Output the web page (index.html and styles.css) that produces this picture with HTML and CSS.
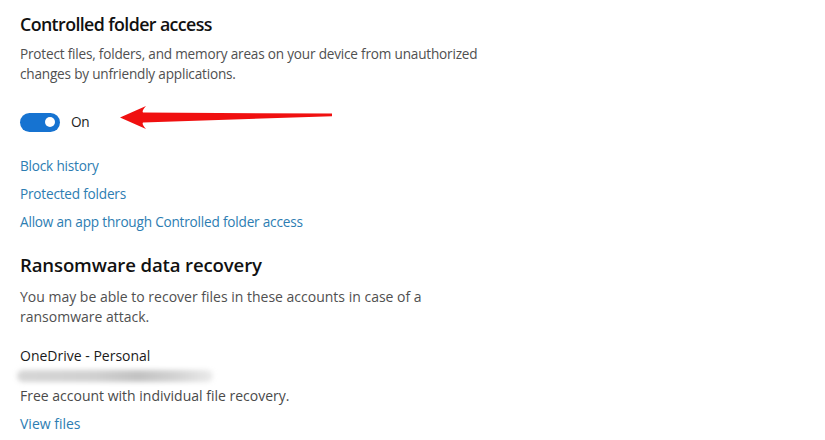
FILE: index.html
```html
<!DOCTYPE html>
<html lang="en">
<head>
<meta charset="utf-8">
<title>Controlled folder access</title>
<link rel="stylesheet" href="styles.css">
</head>
<body>
<main class="page">
  <section class="section section-top">
    <h2 class="title title-1">Controlled folder access</h2>
    <p class="desc">Protect files, folders, and memory areas on your device from unauthorized<br>changes by unfriendly applications.</p>
    <div class="toggle-row">
      <span class="toggle"><span class="knob"></span></span>
      <span class="toggle-label">On</span>
    </div>
    <nav class="links">
      <a class="link" href="#">Block history</a>
      <a class="link" href="#">Protected folders</a>
      <a class="link" href="#">Allow an app through Controlled folder access</a>
    </nav>
  </section>
  <section class="section">
    <h2 class="title title-2">Ransomware data recovery</h2>
    <p class="desc desc-2">You may be able to recover files in these accounts in case of a<br>ransomware attack.</p>
    <div class="account">
      <div class="account-name">OneDrive - Personal</div>
      <div class="account-email"><span class="blur-bar"></span></div>
      <div class="account-info">Free account with individual file recovery.</div>
      <a class="link link-view" href="#">View files</a>
    </div>
  </section>
  <svg class="arrow" width="230" height="40" viewBox="110 98 230 40" aria-hidden="true">
    <path d="M120 117.5 L146 106 Q141.5 111 143 112.5 L332 113.6 L332 116.2 L143 122.5 Q141.5 124 146 129 Z" fill="#f01010"/>
  </svg>
</main>
</body>
</html>
```
FILE: styles.css
```css
html, body {
  margin: 0;
  padding: 0;
  background: #ffffff;
}

body {
  font-family: "Open Sans", "Noto Sans", sans-serif;
  font-size: 14px;
  line-height: 20px;
  color: #505050;
}

.page {
  position: relative;
  width: 825px;
  height: 440px;
  padding: 11px 0 0 20px;
  box-sizing: border-box;
  overflow: hidden;
}

.section {
  display: flex;
  flex-direction: column;
  align-items: flex-start;
}

.section-top {
  font-size: 13.6px;
  letter-spacing: -0.2px;
}

.title {
  margin: 0;
  line-height: 26px;
  font-weight: 600;
  color: #111111;
}

.title-1 {
  font-size: 17.8px;
  letter-spacing: -0.6px;
}

.title-2 {
  margin-top: 20px;
  font-size: 18.6px;
  letter-spacing: -0.15px;
}

.desc {
  margin: 7px 0 0 0;
}

.desc-2 {
  margin-top: 9px;
}

.toggle-row {
  display: flex;
  align-items: center;
  gap: 11px;
  margin-top: 28px;
  height: 20px;
}

.toggle {
  display: flex;
  align-items: center;
  justify-content: flex-end;
  width: 40px;
  height: 19px;
  padding-right: 5px;
  box-sizing: border-box;
  border-radius: 10px;
  background: #1673d1;
}

.knob {
  width: 10px;
  height: 10px;
  border-radius: 50%;
  background: #ffffff;
}

.toggle-label {
  color: #222222;
}

.links {
  display: flex;
  flex-direction: column;
  gap: 8px;
  margin-top: 24px;
}

.link {
  color: #2d7db2;
  text-decoration: none;
}

.account {
  display: flex;
  flex-direction: column;
  align-items: flex-start;
  margin-top: 19px;
}

.account-name {
  color: #1a1a1a;
}

.account-email {
  display: flex;
  align-items: center;
  height: 20px;
  margin-left: -3px;
}

.blur-bar {
  display: block;
  width: 196px;
  height: 12px;
  border-radius: 6px;
  background: linear-gradient(90deg, #d6d6d6 0%, #d0d0d0 40%, #c2c2c2 62%, #d4d4d4 82%, #ebebeb 100%);
  filter: blur(2.5px);
}

.account-info {
  color: #4a4a4a;
}

.link-view {
  margin-top: 8px;
}

.arrow {
  position: absolute;
  left: 110px;
  top: 98px;
}
```
